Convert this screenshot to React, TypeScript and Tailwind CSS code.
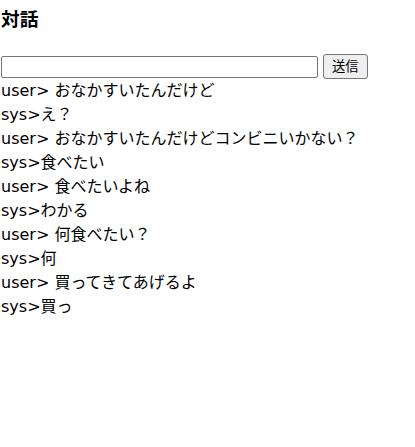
const log = [
  "user> おなかすいたんだけど",
  "sys>え？",
  "user> おなかすいたんだけどコンビニいかない？",
  "sys>食べたい",
  "user> 食べたいよね",
  "sys>わかる",
  "user> 何食べたい？",
  "sys>何",
  "user> 買ってきてあげるよ",
  "sys>買っ",
];

export default function App() {
  return (
    <div className="min-h-[447px] bg-white text-black font-['DejaVu_Sans','Noto_Sans_CJK_JP',sans-serif]">
      <h3 className="pl-[1px] pt-[6px] text-[18.72px] font-bold leading-[28px]">対話</h3>

      <div className="mt-[20px] flex items-center">
        <input
          type="text"
          className="ml-[1px] h-[22px] w-[317px] rounded-[2px] border border-[#767676] bg-white px-1 text-[13px] outline-none"
        />
        <button className="ml-[5px] h-[25px] rounded-[3px] border border-[#767676] bg-[#efefef] px-[8px] text-[13.33px] leading-none">
          送信
        </button>
      </div>

      <div className="text-[16px] leading-[24px]">
        {log.map((line, i) => (
          <div key={i} className="whitespace-pre pl-[1px]">
            {line}
          </div>
        ))}
      </div>
    </div>
  );
}
